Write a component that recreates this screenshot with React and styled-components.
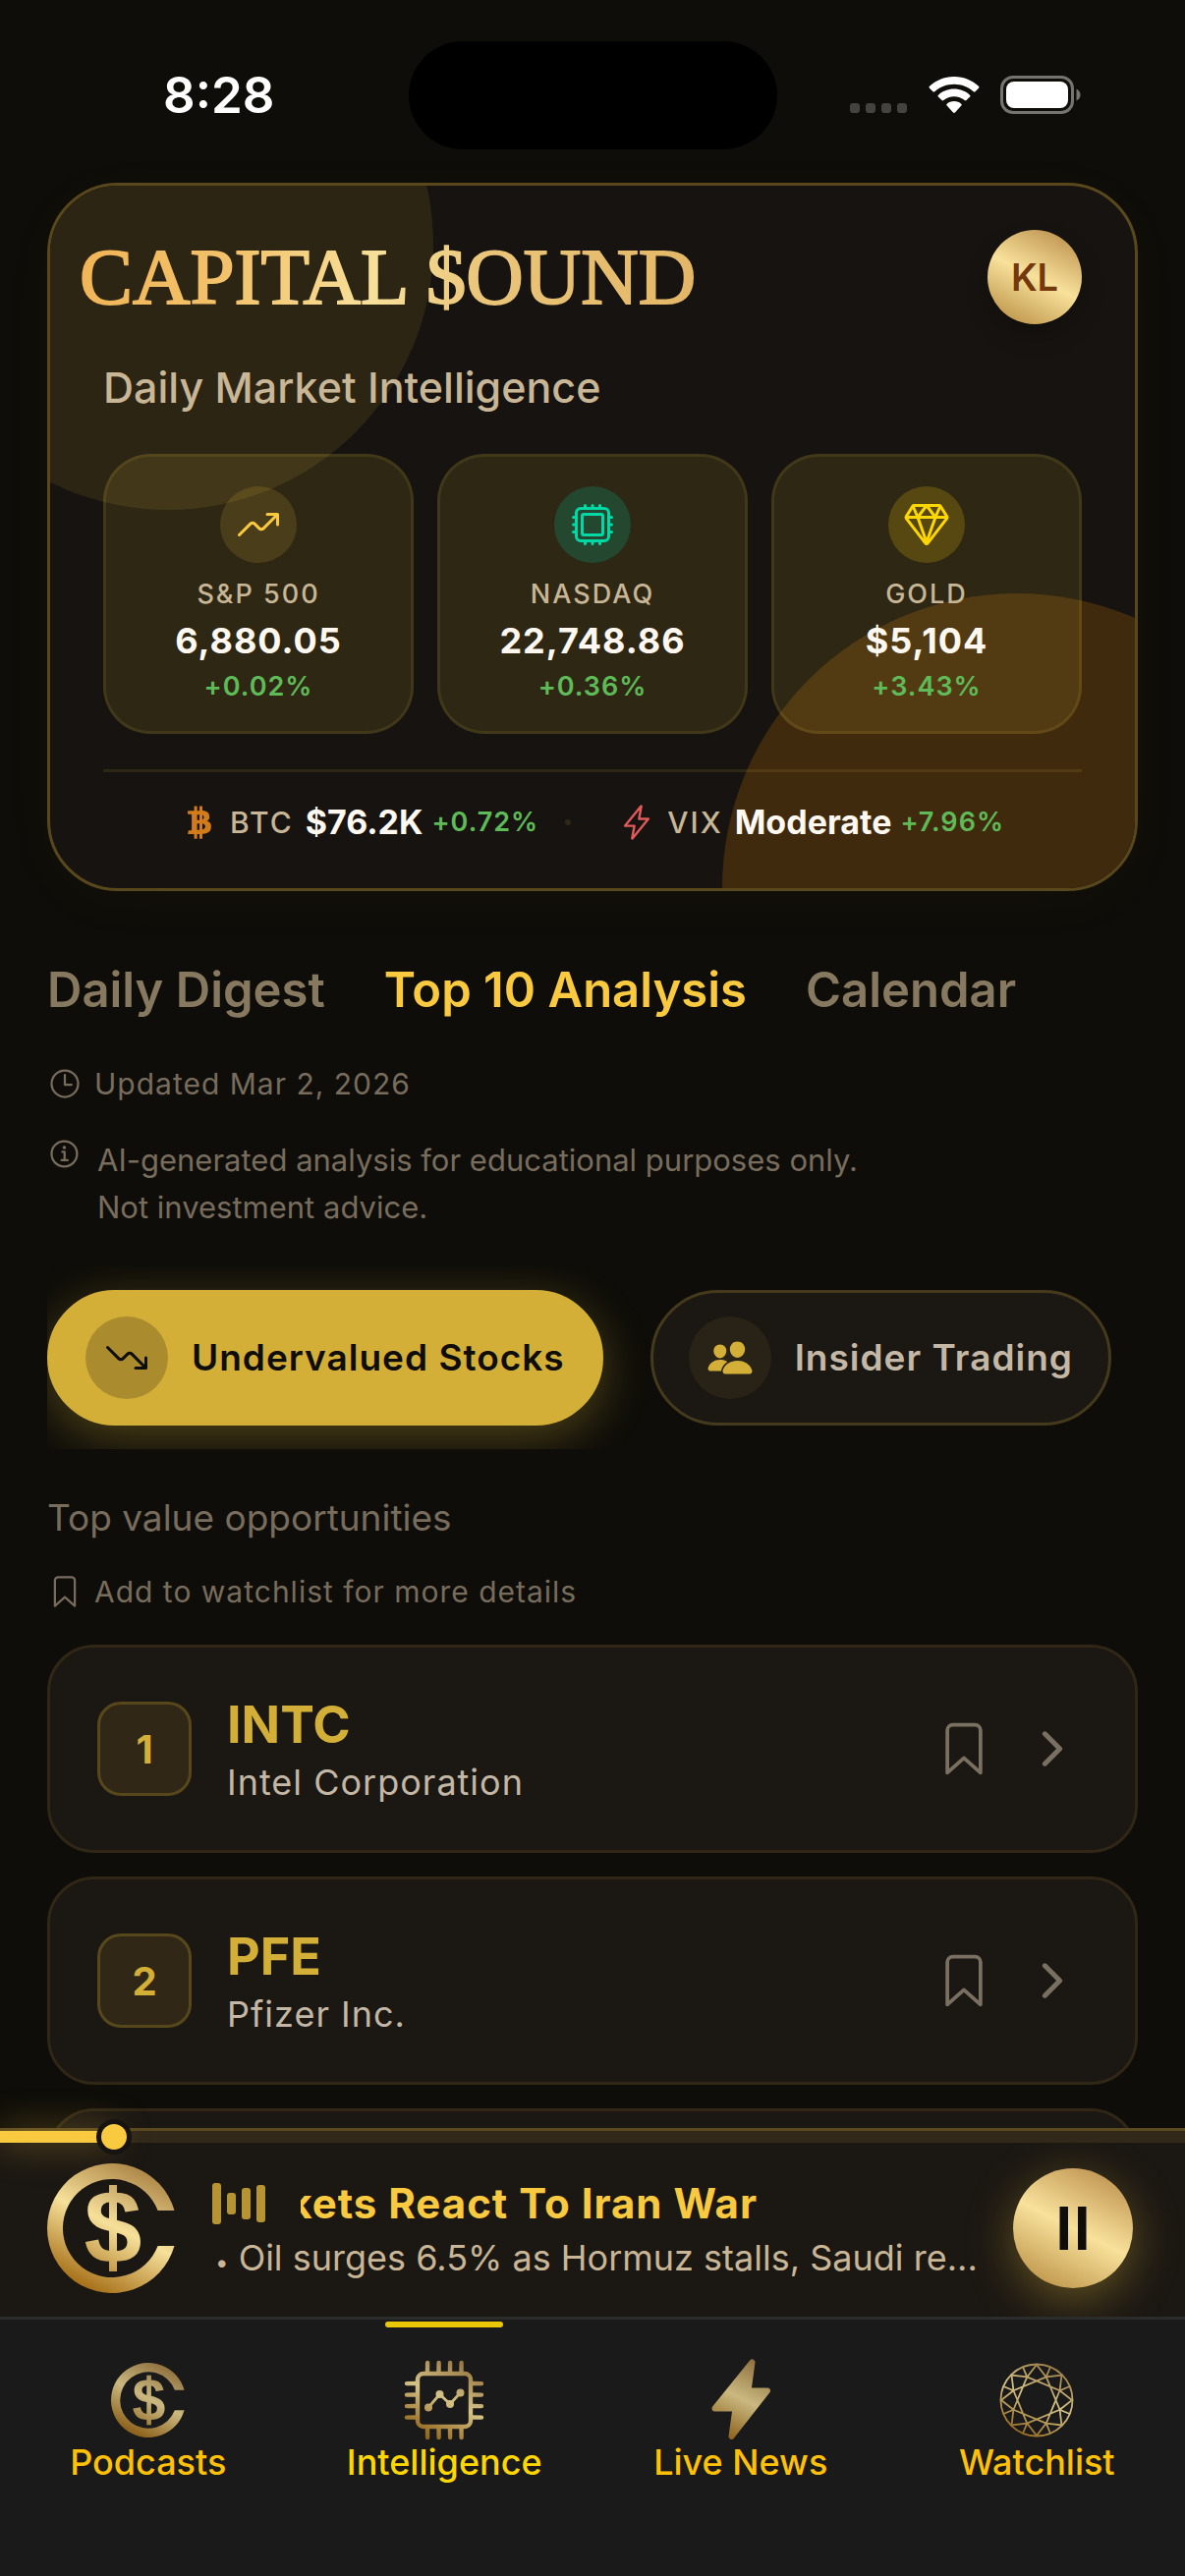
import React, { useId, useState } from "react";
import styled, { createGlobalStyle, css } from "styled-components";
import {
  IoTrendingUpOutline,
  IoTrendingDownOutline,
  IoHardwareChipOutline,
  IoDiamondOutline,
  IoLogoBitcoin,
  IoFlashOutline,
  IoTimeOutline,
  IoInformationCircleOutline,
  IoPeople,
  IoBookmarkOutline,
  IoChevronForward,
} from "react-icons/io5";

const color = {
  page: "#0e0d09",
  card: "#161310",
  surface: "#1b1713",
  gold: "#d4af37",
  bright: "#f9c93f",
  sand: "#c8b696",
  soft: "#c4b7a6",
  muted: "#786c5c",
  tab: "#87795f",
  cream: "#fff8f0",
  green: "#5fbb57",
};

const metal = "linear-gradient(207deg, #b98d4a 5%, #f8e19b 50%, #b98f43 95%)";

const GlobalStyle = createGlobalStyle`
  *, *::before, *::after { box-sizing: border-box; }
  body {
    margin: 0;
    background: ${color.page};
    font-family: Inter, "Liberation Sans", sans-serif;
    -webkit-font-smoothing: antialiased;
  }
  h1, p, ul { margin: 0; padding: 0; }
  ul { list-style: none; }
  button {
    font: inherit;
    color: inherit;
    background: none;
    border: 0;
    padding: 0;
    cursor: pointer;
  }
  svg { display: block; flex: none; }
`;

const Screen = styled.div`
  height: 100vh;
  display: flex;
  flex-direction: column;
  background: ${color.page};
`;

const Content = styled.main`
  flex: 1;
  min-height: 0;
  overflow: hidden;
  padding: 0 48px;
`;

/* ---------- status bar ---------- */

const StatusBar = styled.div`
  display: grid;
  grid-template-columns: 1fr 375px 1fr;
  align-items: center;
  margin: 0 -48px;
  padding: 42px 0 34px;
`;

const Clock = styled.time`
  padding-left: 166px;
  color: #fff;
  font-size: 51px;
  font-weight: 600;
  line-height: 60px;
`;

const Island = styled.div`
  height: 110px;
  border-radius: 55px;
  background: #000;
`;

const StatusIcons = styled.div`
  display: flex;
  justify-content: flex-end;
  align-items: center;
  gap: 21px;
  padding-right: 106px;
`;

/* ---------- market card ---------- */

const MarketCard = styled.section`
  position: relative;
  isolation: isolate;
  overflow: hidden;
  border: 3px solid #5a481d;
  border-radius: 72px;
  background: ${color.card};
  padding: 45px 54px 46px;
`;

const CardShadow = styled.div`
  border-radius: 72px;
  box-shadow: 0 12px 60px rgba(212, 175, 55, 0.03);
`;

const Glow = styled.span`
  position: absolute;
  z-index: -1;
  border-radius: 50%;
  ${(p) =>
    p.$corner === "top"
      ? css`
          width: 540px;
          height: 540px;
          top: -210px;
          left: -150px;
          background: #2d2514;
        `
      : css`
          width: 600px;
          height: 600px;
          right: -180px;
          bottom: -300px;
          background: #402a0e;
        `}
`;

const CardHead = styled.div`
  display: flex;
  align-items: center;
  justify-content: space-between;
  margin-left: -24px;
`;

const Wordmark = styled.h1`
  font-family: "Liberation Serif", "Times New Roman", serif;
  font-size: 81px;
  font-weight: 400;
  line-height: 96px;
  color: transparent;
  background: linear-gradient(100deg, #f0b455 0%, #f3c26c 25%, #f7e09a 48%, #eac57a 65%, #e3b666 100%);
  background-clip: text;
  -webkit-background-clip: text;
  -webkit-text-stroke: 2px transparent;
`;

const Avatar = styled.button`
  width: 96px;
  height: 96px;
  border-radius: 50%;
  background: ${metal};
  box-shadow: 0 12px 24px rgba(0, 0, 0, 0.2);
  color: #73390c;
  font-size: 38px;
  font-weight: 600;
`;

const Subtitle = styled.p`
  margin-top: 36px;
  color: ${color.sand};
  font-size: 43px;
  font-weight: 500;
  line-height: 56px;
`;

const Tiles = styled.ul`
  display: grid;
  grid-template-columns: repeat(3, 1fr);
  gap: 24px;
  margin-top: 40px;
`;

const Tile = styled.li`
  display: flex;
  flex-direction: column;
  align-items: center;
  border: 3px solid rgba(212, 175, 55, 0.12);
  border-radius: 48px;
  background: rgba(212, 175, 55, 0.13);
  padding: 30px 12px 25px;
`;

const TileIcon = styled.span`
  display: grid;
  place-items: center;
  width: 78px;
  height: 78px;
  border-radius: 50%;
  color: ${(p) => p.$tint};
  background: ${(p) => p.$back};
  font-size: 48px;
`;

const TileLabel = styled.span`
  margin-top: 12px;
  color: ${color.sand};
  font-size: 27px;
  font-weight: 500;
  letter-spacing: 2px;
  line-height: 40px;
`;

const TileValue = styled.strong`
  color: ${color.cream};
  font-size: 36px;
  font-weight: 700;
  letter-spacing: 1px;
  line-height: 54px;
`;

const Change = styled.span`
  color: ${color.green};
  font-size: 27px;
  font-weight: 600;
  letter-spacing: 1px;
  line-height: 40px;
`;

const Ticker = styled.div`
  display: flex;
  justify-content: center;
  align-items: center;
  margin-top: 36px;
  padding-top: 30px;
  border-top: 3px solid rgba(212, 175, 55, 0.13);
`;

const Quote = styled.p`
  display: flex;
  align-items: center;
  line-height: 42px;
`;

const QuoteIcon = styled.span`
  color: ${(p) => p.$tint};
  font-size: 38px;
`;

const QuoteLabel = styled.span`
  margin: 0 12px;
  color: ${color.sand};
  font-size: 30px;
  font-weight: 500;
  letter-spacing: 2px;
`;

const QuoteValue = styled.strong`
  margin-right: 9px;
  color: ${color.cream};
  font-size: 34px;
  font-weight: 700;
`;

const Dot = styled.span`
  width: 6px;
  height: 6px;
  margin: 0 48px 0 27px;
  border-radius: 50%;
  background: #302815;
`;

/* ---------- tabs and notes ---------- */

const Tabs = styled.nav`
  display: flex;
  gap: 60px;
  margin-top: 72px;
`;

const TabButton = styled.button`
  color: ${(p) => (p.$active ? color.bright : color.tab)};
  font-size: 49px;
  font-weight: 600;
  line-height: 58px;
`;

const Note = styled.p`
  display: flex;
  align-items: center;
  gap: 12px;
  margin-top: ${(p) => p.$space}px;
  color: ${color.muted};
  font-size: 30px;
  letter-spacing: 1px;
  line-height: 36px;

  svg {
    font-size: 36px;
  }
`;

const Disclaimer = styled(Note)`
  align-items: flex-start;
  gap: 15px;
  font-size: 31px;
  letter-spacing: normal;
  line-height: 48px;
`;

/* ---------- filter chips ---------- */

const Chips = styled.div`
  display: flex;
  gap: 48px;
  margin: 36px -48px 0 0;
  padding: 24px 0;
  overflow: hidden;
`;

const Chip = styled.button`
  display: flex;
  align-items: center;
  gap: 24px;
  border: 3px solid ${(p) => (p.$active ? color.gold : "#463a1c")};
  border-radius: 69px;
  padding: 24px 36px;
  color: ${(p) => (p.$active ? "#0e0d09" : color.soft)};
  background: ${(p) => (p.$active ? color.gold : color.surface)};
  box-shadow: ${(p) => (p.$active ? "0 12px 48px rgba(212, 175, 55, 0.33)" : "none")};
  font-size: 37px;
  font-weight: 600;
  letter-spacing: 1px;
  line-height: 48px;
  white-space: nowrap;
`;

const ChipIcon = styled.span`
  display: grid;
  place-items: center;
  width: 84px;
  height: 84px;
  border-radius: 50%;
  color: ${(p) => (p.$active ? "#0e0d09" : color.gold)};
  background: ${(p) => (p.$active ? "#aa8c2e" : "#292317")};
  font-size: 48px;
`;

const Lead = styled.p`
  margin-top: 46px;
  color: ${color.muted};
  font-size: 37px;
  line-height: 48px;
`;

/* ---------- stock list ---------- */

const StockList = styled.ul`
  display: grid;
  gap: 24px;
  margin-top: 36px;
`;

const StockRow = styled.li`
  display: flex;
  align-items: center;
  gap: 36px;
  min-height: 212px;
  border: 3px solid #302716;
  border-radius: 48px;
  background: ${color.surface};
  padding: 45px 57px 45px 48px;
`;

const Rank = styled.span`
  display: grid;
  place-items: center;
  width: 96px;
  height: 96px;
  border: 3px solid #57481c;
  border-radius: 24px;
  background: #302716;
  color: ${color.gold};
  font-size: 40px;
  font-weight: 700;
`;

const StockName = styled.div`
  flex: 1;
`;

const Symbol = styled.p`
  color: ${color.gold};
  font-size: 52px;
  font-weight: 700;
  line-height: 68px;
`;

const Company = styled.p`
  color: ${color.soft};
  font-size: 36px;
  letter-spacing: 1px;
  line-height: 48px;
`;

const RowActions = styled.div`
  display: flex;
  align-items: center;
  gap: 33px;
  color: #7a7062;
`;

const IconButton = styled.button`
  font-size: ${(p) => p.$size}px;
`;

/* ---------- player ---------- */

const Player = styled.section`
  position: relative;
  z-index: 1;
  border-top: 3px solid #5b4920;
  background: ${color.surface};
`;

const Track = styled.div`
  position: relative;
  height: 12px;
  background: #33291a;
`;

const Fill = styled.span`
  display: block;
  height: 100%;
  background: ${color.bright};
  box-shadow: 0 0 36px rgba(249, 201, 63, 0.5);
`;

const Seek = styled.input`
  position: absolute;
  inset: -12px 0;
  width: 100%;
  height: 36px;
  margin: 0;
  appearance: none;
  background: transparent;

  &::-webkit-slider-thumb {
    appearance: none;
    width: 36px;
    height: 36px;
    border: 5px solid ${color.card};
    border-radius: 50%;
    background: ${color.bright};
  }
`;

const PlayerBody = styled.div`
  display: flex;
  align-items: center;
  gap: 36px;
  height: 177px;
  padding: 0 53px 3px 48px;
`;

const TrackInfo = styled.div`
  flex: 1;
  min-width: 0;
  padding-top: 9px;
`;

const TitleLine = styled.div`
  display: flex;
  align-items: center;
  gap: 36px;
`;

const Marquee = styled.div`
  flex: 1;
  min-width: 0;
  overflow: hidden;
`;

const TrackTitle = styled.p`
  width: max-content;
  margin-left: -97px;
  color: ${color.bright};
  font-size: 42px;
  font-weight: 700;
  letter-spacing: 1px;
  line-height: 56px;
  white-space: nowrap;
`;

const TrackNote = styled.p`
  color: ${color.sand};
  font-size: 36px;
  line-height: 54px;
  white-space: nowrap;
`;

const Bullet = styled.span`
  padding-left: 3px;
  font-size: 24px;
`;

const PauseButton = styled.button`
  display: grid;
  place-items: center;
  width: 122px;
  height: 122px;
  border-radius: 50%;
  background: ${metal};
  box-shadow: 0 12px 48px rgba(212, 175, 55, 0.4);
`;

/* ---------- bottom navigation ---------- */

const BottomNav = styled.nav`
  position: relative;
  z-index: 2;
  display: grid;
  grid-template-columns: repeat(4, 1fr);
  border-top: 3px solid #2c2c2c;
  background: #1a1a1a;
  padding-bottom: 95px;
`;

const NavLink = styled.a`
  position: relative;
  display: flex;
  flex-direction: column;
  align-items: center;
  padding-top: 40px;
  color: ${(p) => (p.$active ? "#ffd700" : "#ffc107")};
  font-size: 36px;
  font-weight: 500;
  line-height: 42px;
  text-decoration: none;

  &::before {
    content: "";
    position: absolute;
    top: 2px;
    width: 120px;
    height: 6px;
    border-radius: 3px;
    background: ${(p) => (p.$active ? "#ebc807" : "transparent")};
  }
`;

const NavCoinBox = styled.span`
  display: grid;
  place-items: center;
  height: 84px;
`;

/* ---------- drawings ---------- */

function MetalGradient({ id, size }) {
  return (
    <linearGradient
      id={id}
      gradientUnits="userSpaceOnUse"
      x1={size * 0.72}
      y1={size * 0.06}
      x2={size * 0.28}
      y2={size * 0.94}
    >
      <stop offset="0" stopColor="#b08a4b" />
      <stop offset="0.48" stopColor="#f6e09a" />
      <stop offset="1" stopColor="#a8721a" />
    </linearGradient>
  );
}

function CoinMark({ size, opacity = 1 }) {
  const id = useId();
  return (
    <svg width={size} height={size} viewBox="0 0 132 132" opacity={opacity} aria-hidden="true">
      <defs>
        <MetalGradient id={id} size={132} />
      </defs>
      <path
        fill={`url(#${id})`}
        d="M129.5 48 A66 66 0 1 0 129.5 84 H112.6 A50 50 0 1 1 112.6 48 Z"
      />
      <text
        x="67"
        y="101"
        textAnchor="middle"
        fontFamily="Liberation Sans, Arial, sans-serif"
        fontWeight="700"
        fontSize="106"
        fill={`url(#${id})`}
      >
        $
      </text>
      <rect x="63" y="22" width="8" height="88" fill={`url(#${id})`} />
    </svg>
  );
}

function NavCoin() {
  return (
    <NavCoinBox>
      <CoinMark size={76} opacity={0.8} />
    </NavCoinBox>
  );
}

function ChipMark() {
  const id = useId();
  const pins = [25, 36.5, 48, 59.5];
  return (
    <svg width="84" height="84" viewBox="0 0 84 84" opacity="0.85" aria-hidden="true">
      <defs>
        <MetalGradient id={id} size={84} />
      </defs>
      <g stroke={`url(#${id})`} fill="none" strokeWidth="4.4" strokeLinecap="round">
        <rect x="15" y="15" width="54" height="54" rx="6" />
        {pins.map((p) => (
          <path
            key={p}
            d={`M${p} 13 L${p + 0.1} 4 M${p} 71 L${p + 0.1} 80 M13 ${p} L4 ${p + 0.1} M71 ${p} L80 ${p + 0.1}`}
          />
        ))}
        <path d="M26 49.500 L37.500 36 L48 46 L58.500 34.500" strokeWidth="2.8" />
      </g>
      <g fill={`url(#${id})`}>
        <circle cx="26" cy="49.500" r="4" />
        <circle cx="37.500" cy="36" r="4" />
        <circle cx="48" cy="46" r="4" />
        <circle cx="58.500" cy="34.500" r="4" />
      </g>
    </svg>
  );
}

function BoltMark() {
  const id = useId();
  return (
    <svg width="84" height="84" viewBox="0 0 84 84" opacity="0.8" aria-hidden="true">
      <defs>
        <MetalGradient id={id} size={84} />
      </defs>
      <path
        d="M53.500 3.500 L49.500 32.500 H69 L32.500 79 L36.500 50.500 H15.500 Z"
        fill={`url(#${id})`}
        stroke={`url(#${id})`}
        strokeWidth="6"
        strokeLinejoin="round"
      />
    </svg>
  );
}

function GemMark() {
  const id = useId();
  const at = (deg, r) => {
    const a = (deg * Math.PI) / 180;
    return `${(42 + r * Math.sin(a)).toFixed(2)} ${(42 - r * Math.cos(a)).toFixed(2)}`;
  };
  const facets = Array.from({ length: 8 }, (_, k) => {
    const o = k * 45;
    const m = o + 22.5;
    return (
      `M${at(o - 22.5, 25.5)} L${at(o, 36)} L${at(m, 25.5)} ` +
      `M${at(m, 25.5)} L${at(m, 36.5)} M${at(m, 25.5)} L${at(m + 90, 25.5)}`
    );
  }).join(" ");
  return (
    <svg width="84" height="84" viewBox="0 0 84 84" opacity="0.85" aria-hidden="true">
      <defs>
        <MetalGradient id={id} size={84} />
      </defs>
      <g fill="none" stroke={`url(#${id})`} strokeWidth="1.8">
        <circle cx="42" cy="42" r="36.500" />
        <path d={facets} />
      </g>
    </svg>
  );
}

function Equalizer() {
  return (
    <svg width="54" height="44" viewBox="0 0 54 44" fill="#b59431" aria-hidden="true">
      <rect x="0" y="1" width="9" height="42" rx="3" />
      <rect x="15" y="11" width="9" height="22" rx="3" />
      <rect x="30" y="6" width="9" height="32" rx="3" />
      <rect x="45" y="3" width="9" height="38" rx="3" />
    </svg>
  );
}

function SignalDots() {
  return (
    <svg width="60" height="38" viewBox="0 0 60 38" fill="#44433f" aria-hidden="true">
      {[1, 17, 33, 49].map((x) => (
        <rect key={x} x={x} y="27" width="10" height="10" rx="3" />
      ))}
    </svg>
  );
}

function Wifi() {
  return (
    <svg width="52" height="38" viewBox="0 0 52 38" fill="#fff" aria-hidden="true">
      <path d="M26 0 C36.200 0 44.800 4 51 9.800 C51.600 10.400 51.600 11.100 51 11.700 L47.500 15.200 C47 15.700 46.300 15.700 45.700 15.200 C40.400 10.400 33.600 7.700 26 7.700 C18.400 7.700 11.600 10.400 6.300 15.200 C5.700 15.700 5 15.700 4.500 15.200 L1 11.700 C0.400 11.100 0.400 10.400 1 9.800 C7.200 4 15.800 0 26 0 Z" />
      <path d="M26 12.600 C32.400 12.600 38 15 42 18.700 C42.700 19.300 42.700 20 42.100 20.600 L38.500 24.100 C38 24.600 37.300 24.600 36.700 24.100 C33.800 21.600 30.100 20.200 26 20.200 C21.900 20.200 18.200 21.600 15.300 24.100 C14.700 24.600 14 24.600 13.500 24.100 L9.900 20.600 C9.300 20 9.300 19.300 10 18.700 C14 15 19.600 12.600 26 12.600 Z" />
      <path d="M26 25 C29 25 31.500 26 33.300 27.700 C33.900 28.300 33.900 28.900 33.300 29.500 L27 36.500 C26.400 37.100 25.600 37.100 25 36.500 L18.700 29.500 C18.100 28.900 18.100 28.300 18.700 27.700 C20.500 26 23 25 26 25 Z" />
    </svg>
  );
}

function Battery() {
  return (
    <svg width="82" height="40" viewBox="0 0 82 40" aria-hidden="true">
      <rect x="1.500" y="1.500" width="72" height="36" rx="11.500" fill="none" stroke="#75746f" strokeWidth="3" />
      <rect x="6" y="6" width="63" height="27" rx="8" fill="#fff" />
      <path d="M77.500 13.500 C80.500 15 81.500 17 81.500 19.500 C81.500 22 80.500 24 77.500 25.500 Z" fill="#75746f" />
    </svg>
  );
}

function PauseGlyph() {
  return (
    <svg width="28" height="44" viewBox="0 0 28 44" fill="#0e0d09" aria-hidden="true">
      <rect x="0.500" y="0" width="8.500" height="44" />
      <rect x="19" y="0" width="8.500" height="44" />
    </svg>
  );
}

/* ---------- data ---------- */

const indices = [
  { name: "S&P 500", value: "6,880.05", change: "+0.02%", Icon: IoTrendingUpOutline, tint: color.bright, back: "rgba(249, 201, 63, 0.14)" },
  { name: "NASDAQ", value: "22,748.86", change: "+0.36%", Icon: IoHardwareChipOutline, tint: "#00d9a5", back: "#24472f" },
  { name: "GOLD", value: "$5,104", change: "+3.43%", Icon: IoDiamondOutline, tint: "#ffd700", back: "#564810" },
];

const sections = ["Daily Digest", "Top 10 Analysis", "Calendar"];

const filters = [
  { name: "Undervalued Stocks", Icon: IoTrendingDownOutline },
  { name: "Insider Trading", Icon: IoPeople },
];

const stocks = [
  { symbol: "INTC", company: "Intel Corporation" },
  { symbol: "PFE", company: "Pfizer Inc." },
];

const destinations = [
  { name: "Podcasts", Mark: NavCoin },
  { name: "Intelligence", Mark: ChipMark },
  { name: "Live News", Mark: BoltMark },
  { name: "Watchlist", Mark: GemMark },
];

/* ---------- page ---------- */

export default function App() {
  const [section, setSection] = useState("Top 10 Analysis");
  const [filter, setFilter] = useState("Undervalued Stocks");
  const [progress, setProgress] = useState(8.4);

  return (
    <Screen>
      <GlobalStyle />
      <Content>
        <StatusBar>
          <Clock>8:28</Clock>
          <Island />
          <StatusIcons>
            <SignalDots />
            <Wifi />
            <Battery />
          </StatusIcons>
        </StatusBar>

        <CardShadow>
          <MarketCard>
            <Glow $corner="top" />
            <Glow $corner="bottom" />
            <CardHead>
              <Wordmark>CAPITAL $OUND</Wordmark>
              <Avatar type="button">KL</Avatar>
            </CardHead>
            <Subtitle>Daily Market Intelligence</Subtitle>
            <Tiles>
              {indices.map(({ name, value, change, Icon, tint, back }) => (
                <Tile key={name}>
                  <TileIcon $tint={tint} $back={back}>
                    <Icon />
                  </TileIcon>
                  <TileLabel>{name}</TileLabel>
                  <TileValue>{value}</TileValue>
                  <Change>{change}</Change>
                </Tile>
              ))}
            </Tiles>
            <Ticker>
              <Quote>
                <QuoteIcon $tint="#d17c18">
                  <IoLogoBitcoin />
                </QuoteIcon>
                <QuoteLabel>BTC</QuoteLabel>
                <QuoteValue>$76.2K</QuoteValue>
                <Change>+0.72%</Change>
              </Quote>
              <Dot />
              <Quote>
                <QuoteIcon $tint="#e05a5a">
                  <IoFlashOutline />
                </QuoteIcon>
                <QuoteLabel>VIX</QuoteLabel>
                <QuoteValue>Moderate</QuoteValue>
                <Change>+7.96%</Change>
              </Quote>
            </Ticker>
          </MarketCard>
        </CardShadow>

        <Tabs>
          {sections.map((name) => (
            <TabButton key={name} type="button" $active={name === section} onClick={() => setSection(name)}>
              {name}
            </TabButton>
          ))}
        </Tabs>

        <Note $space={48}>
          <IoTimeOutline />
          Updated Mar 2, 2026
        </Note>
        <Disclaimer $space={36}>
          <IoInformationCircleOutline />
          <span>
            AI-generated analysis for educational purposes only.
            <br />
            Not investment advice.
          </span>
        </Disclaimer>

        <Chips>
          {filters.map(({ name, Icon }) => (
            <Chip key={name} type="button" $active={name === filter} onClick={() => setFilter(name)}>
              <ChipIcon $active={name === filter}>
                <Icon />
              </ChipIcon>
              {name}
            </Chip>
          ))}
        </Chips>

        <Lead>Top value opportunities</Lead>
        <Note $space={33}>
          <IoBookmarkOutline />
          Add to watchlist for more details
        </Note>

        <StockList>
          {stocks.map(({ symbol, company }, i) => (
            <StockRow key={symbol}>
              <Rank>{i + 1}</Rank>
              <StockName>
                <Symbol>{symbol}</Symbol>
                <Company>{company}</Company>
              </StockName>
              <RowActions>
                <IconButton type="button" $size={60} aria-label={`Add ${symbol} to watchlist`}>
                  <IoBookmarkOutline />
                </IconButton>
                <IconButton type="button" $size={54} aria-label={`Open ${symbol}`}>
                  <IoChevronForward />
                </IconButton>
              </RowActions>
            </StockRow>
          ))}
          <StockRow aria-hidden="true" />
        </StockList>
      </Content>

      <Player>
        <Track>
          <Fill style={{ width: `${progress + 1.2}%` }} />
          <Seek
            type="range"
            aria-label="Seek"
            min="0"
            max="100"
            step="0.1"
            value={progress}
            onChange={(e) => setProgress(Number(e.target.value))}
          />
        </Track>
        <PlayerBody>
          <CoinMark size={132} />
          <TrackInfo>
            <TitleLine>
              <Equalizer />
              <Marquee>
                <TrackTitle>Markets React To Iran War</TrackTitle>
              </Marquee>
            </TitleLine>
            <TrackNote>
              <Bullet>•</Bullet> Oil surges 6.5% as Hormuz stalls, Saudi re...
            </TrackNote>
          </TrackInfo>
          <PauseButton type="button" aria-label="Pause">
            <PauseGlyph />
          </PauseButton>
        </PlayerBody>
      </Player>

      <BottomNav>
        {destinations.map(({ name, Mark }) => (
          <NavLink key={name} href="#" $active={name === "Intelligence"}>
            <Mark />
            {name}
          </NavLink>
        ))}
      </BottomNav>
    </Screen>
  );
}
